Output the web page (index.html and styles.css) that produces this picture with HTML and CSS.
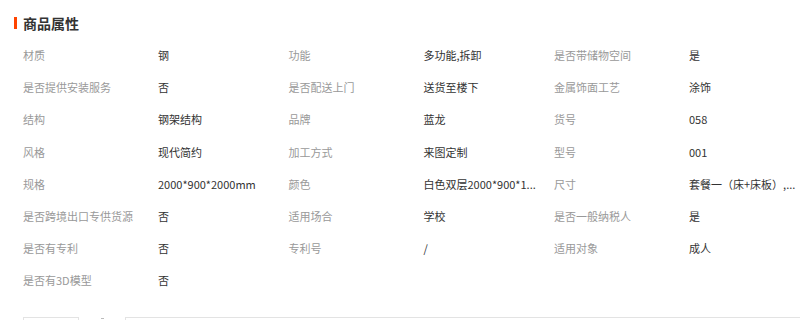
FILE: index.html
```html
<!DOCTYPE html>
<html lang="zh">
<head>
<meta charset="utf-8">
<link rel="stylesheet" href="styles.css">
</head>
<body>
<div class="panel">
  <h2 class="title">商品属性</h2>
  <div class="attrs">
    <div class="item"><span class="k">材质</span><span class="v">钢</span></div>
    <div class="item"><span class="k">功能</span><span class="v">多功能,拆卸</span></div>
    <div class="item"><span class="k">是否带储物空间</span><span class="v">是</span></div>
    <div class="item"><span class="k">是否提供安装服务</span><span class="v">否</span></div>
    <div class="item"><span class="k">是否配送上门</span><span class="v">送货至楼下</span></div>
    <div class="item"><span class="k">金属饰面工艺</span><span class="v">涂饰</span></div>
    <div class="item"><span class="k">结构</span><span class="v">钢架结构</span></div>
    <div class="item"><span class="k">品牌</span><span class="v">蓝龙</span></div>
    <div class="item"><span class="k">货号</span><span class="v">058</span></div>
    <div class="item"><span class="k">风格</span><span class="v">现代简约</span></div>
    <div class="item"><span class="k">加工方式</span><span class="v">来图定制</span></div>
    <div class="item"><span class="k">型号</span><span class="v">001</span></div>
    <div class="item"><span class="k">规格</span><span class="v">2000*900*2000mm</span></div>
    <div class="item"><span class="k">颜色</span><span class="v">白色双层2000*900*1...</span></div>
    <div class="item"><span class="k">尺寸</span><span class="v">套餐一（床+床板）,...</span></div>
    <div class="item"><span class="k">是否跨境出口专供货源</span><span class="v">否</span></div>
    <div class="item"><span class="k">适用场合</span><span class="v">学校</span></div>
    <div class="item"><span class="k">是否一般纳税人</span><span class="v">是</span></div>
    <div class="item"><span class="k">是否有专利</span><span class="v">否</span></div>
    <div class="item"><span class="k">专利号</span><span class="v">/</span></div>
    <div class="item"><span class="k">适用对象</span><span class="v">成人</span></div>
    <div class="item"><span class="k">是否有3D模型</span><span class="v">否</span></div>
  </div>
  <div class="next">
    <div class="next-box"></div>
    <div class="next-mark"></div>
    <div class="next-line"></div>
  </div>
</div>
</body>
</html>
```
FILE: styles.css
```css
* { box-sizing: border-box; }
html, body { margin: 0; padding: 0; background: #fff; }
body {
  font-family: "Noto Sans CJK SC", "Noto Sans", sans-serif;
  width: 800px;
  height: 320px;
  overflow: hidden;
}
.panel {
  padding: 14px 0 0 14px;
}
.title {
  margin: 0;
  font-size: 14px;
  font-weight: bold;
  color: #333;
  line-height: 18px;
  height: 18px;
  padding-left: 9px;
  display: flex;
  align-items: center;
  position: relative;
}
.title::before {
  content: "";
  position: absolute;
  left: 0;
  top: 3px;
  width: 3px;
  height: 12px;
  background: #ff4400;
}
.attrs {
  margin-top: 7px;
  padding-left: 9px;
  display: grid;
  grid-template-columns: 265.5px 265.5px 246px;
  grid-auto-rows: 32.2px;
  font-size: 11px;
}
.item {
  display: flex;
  align-items: center;
  min-width: 0;
}
.k {
  width: 135px;
  flex: none;
  color: #999;
  white-space: nowrap;
}
.v {
  color: #333;
  white-space: nowrap;
}
.next {
  margin-top: 20px;
  display: flex;
  align-items: flex-start;
  padding-left: 9px;
}
.next-box {
  width: 56px;
  height: 10px;
  border-top: 1px solid #e3e3e3;
  border-left: 1px solid #e3e3e3;
  border-right: 1px solid #e3e3e3;
}
.next-mark {
  margin-left: 22px;
  margin-top: 1px;
  width: 3px;
  height: 3px;
  border-top: 1px solid #bbb;
}
.next-line {
  margin-left: 21px;
  flex: 1;
  height: 10px;
  border-top: 1px solid #e3e3e3;
  border-left: 1px solid #e3e3e3;
}
```
